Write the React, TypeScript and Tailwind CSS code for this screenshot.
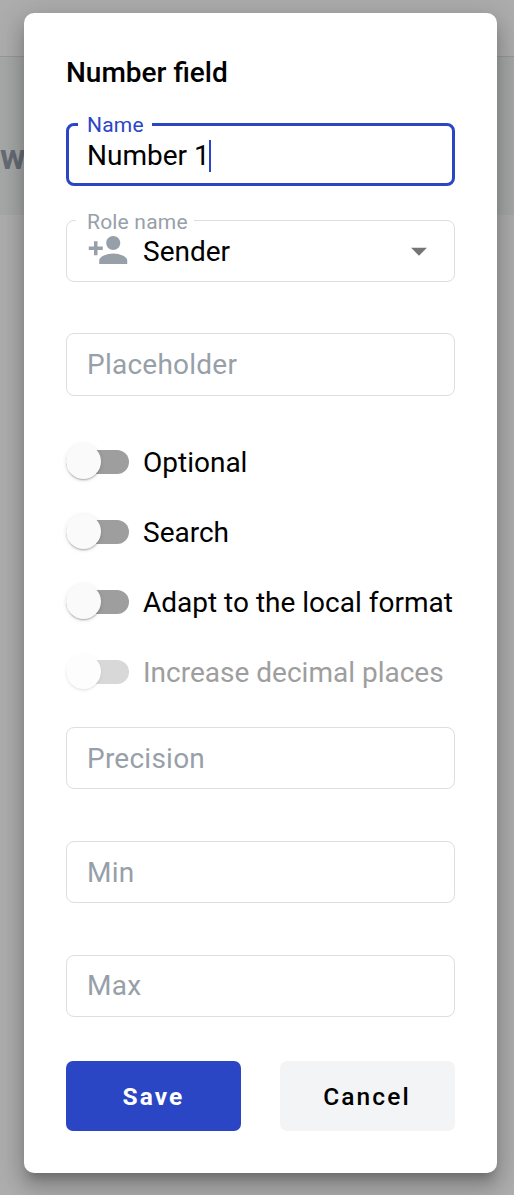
import { ReactNode } from "react";
import { MdPersonAdd, MdArrowDropDown } from "react-icons/md";

function Outlined({ label, labelClass, className, children }: { label?: string; labelClass?: string; className: string; children: ReactNode }) {
  return (
    <div className={`relative flex w-[389px] shrink-0 items-center rounded-[8px] ${className}`}>
      {label && (
        <span className={`absolute bg-white whitespace-nowrap text-[21px] leading-[24px] tracking-[0.2px] ${labelClass}`}>{label}</span>
      )}
      {children}
    </div>
  );
}

function Empty({ text, className }: { text: string; className: string }) {
  return (
    <Outlined className={`border border-[#dedede] pl-[20px] ${className}`}>
      <span className="text-[28px] leading-[32px] tracking-[0.24px] text-[#979fa9]">{text}</span>
    </Outlined>
  );
}

function Toggle({ text, disabled }: { text: string; disabled?: boolean }) {
  return (
    <div className="flex h-[70px] items-center">
      <div className="relative h-[24px] w-[63px] shrink-0">
        <div className={`h-[24px] w-[63px] rounded-full ${disabled ? "bg-[#d8d8d8]" : "bg-[#9e9e9e]"}`} />
        <div
          className={`absolute -top-[6px] left-0 size-[35px] rounded-full ${
            disabled
              ? "bg-[#fdfdfd] shadow-[0_2px_3px_-1px_rgba(0,0,0,0.1),0_1px_4px_rgba(0,0,0,0.04)]"
              : "bg-[#fafafa] shadow-[0_2px_2px_-1px_rgba(0,0,0,0.3),0_1px_5px_rgba(0,0,0,0.1)]"
          }`}
        />
      </div>
      <span className={`mt-[2px] ml-[14px] whitespace-nowrap text-[28px] leading-[32px] ${disabled ? "text-[#9e9e9e]" : "text-black"}`}>{text}</span>
    </div>
  );
}

export default function App() {
  return (
    <div className="relative h-[1195px] w-[514px] overflow-hidden bg-[#adadad] font-['Roboto',sans-serif]">
      <div className="h-[56px]" />
      <div className="flex h-[159px] items-start border-t border-[#999696] bg-[#a5a8a7] pt-[81px]">
        <span className="text-[35px] leading-[40px] font-bold text-[#666b74]">w</span>
      </div>
      <div className="absolute top-[13px] left-[24px] flex h-[1160px] w-[473px] flex-col rounded-[10px] bg-white px-[42px] shadow-[0_9px_10px_-5px_rgba(0,0,0,0.2),0_14px_18px_2px_rgba(0,0,0,0.14),0_5px_28px_4px_rgba(0,0,0,0.14)]">
        <h1 className="mt-[44px] h-[32px] text-[28px] leading-[32px] font-medium text-black">Number field</h1>
        <Outlined label="Name" labelClass="-top-[13px] left-[9px] pr-[8px] pl-[9px] text-[#2b46c5]" className="mt-[34px] h-[63px] border-[3px] border-[#2b46c5] pl-[18px]">
          <span className="mt-[2px] text-[28px] leading-[32px] text-black">Number 1</span>
          <span className="mt-[2px] -ml-px h-[32px] w-[2px] bg-[#2b46c5]" />
        </Outlined>
        <Outlined label="Role name" labelClass="-top-[11px] left-[9px] pr-[6px] pl-[11px] text-[#979fa9]" className="mt-[34px] h-[62px] border border-[#dedede] pl-[20px]">
          <MdPersonAdd className="mb-[2px] size-[42px] shrink-0 text-[#979fa9]" />
          <span className="mt-[2px] ml-[14px] flex-1 text-[28px] leading-[32px] text-black">Sender</span>
          <MdArrowDropDown className="mr-[16px] size-[38px] text-[#757575]" />
        </Outlined>
        <Empty text="Placeholder" className="mt-[51px] h-[63px]" />
        <div className="mt-[31px] flex flex-col">
          <Toggle text="Optional" />
          <Toggle text="Search" />
          <Toggle text="Adapt to the local format" />
          <Toggle text="Increase decimal places" disabled />
        </div>
        <Empty text="Precision" className="mt-[20px] h-[62px] pt-[2px]" />
        <Empty text="Min" className="mt-[52px] h-[62px] pt-[2px]" />
        <Empty text="Max" className="mt-[52px] h-[62px]" />
        <div className="mt-[44px] flex justify-between">
          <button className="h-[70px] w-[175px] rounded-[7px] bg-[#2b46c5] pt-[2px] text-[24.5px] font-bold tracking-[2.1px] text-white">Save</button>
          <button className="h-[70px] w-[175px] rounded-[7px] bg-[#f3f4f6] pt-[2px] pr-px text-[24.5px] font-medium tracking-[2.1px] text-black">Cancel</button>
        </div>
      </div>
    </div>
  );
}
